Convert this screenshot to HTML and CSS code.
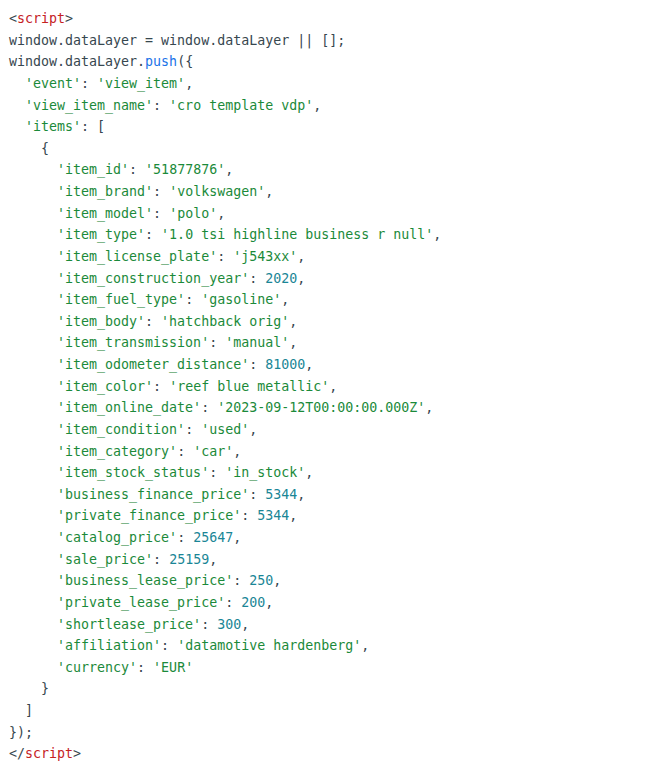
FILE: index.html
```html
<!DOCTYPE html>
<html>
<head>
<meta charset="utf-8">
<link rel="stylesheet" href="styles.css">
</head>
<body>
<div class="code">
<div class="ln">&lt;<span class="tag">script</span>&gt;</div>
<div class="ln">window.dataLayer = window.dataLayer || [];</div>
<div class="ln">window.dataLayer.<span class="fn">push</span>({</div>
<div class="ln i1"><span class="s">'event'</span>: <span class="s">'view_item'</span>,</div>
<div class="ln i1"><span class="s">'view_item_name'</span>: <span class="s">'cro template vdp'</span>,</div>
<div class="ln i1"><span class="s">'items'</span>: [</div>
<div class="ln i2">{</div>
<div class="ln i3"><span class="s">'item_id'</span>: <span class="s">'51877876'</span>,</div>
<div class="ln i3"><span class="s">'item_brand'</span>: <span class="s">'volkswagen'</span>,</div>
<div class="ln i3"><span class="s">'item_model'</span>: <span class="s">'polo'</span>,</div>
<div class="ln i3"><span class="s">'item_type'</span>: <span class="s">'1.0 tsi highline business r null'</span>,</div>
<div class="ln i3"><span class="s">'item_license_plate'</span>: <span class="s">'j543xx'</span>,</div>
<div class="ln i3"><span class="s">'item_construction_year'</span>: <span class="n">2020</span>,</div>
<div class="ln i3"><span class="s">'item_fuel_type'</span>: <span class="s">'gasoline'</span>,</div>
<div class="ln i3"><span class="s">'item_body'</span>: <span class="s">'hatchback orig'</span>,</div>
<div class="ln i3"><span class="s">'item_transmission'</span>: <span class="s">'manual'</span>,</div>
<div class="ln i3"><span class="s">'item_odometer_distance'</span>: <span class="n">81000</span>,</div>
<div class="ln i3"><span class="s">'item_color'</span>: <span class="s">'reef blue metallic'</span>,</div>
<div class="ln i3"><span class="s">'item_online_date'</span>: <span class="s">'2023-09-12T00:00:00.000Z'</span>,</div>
<div class="ln i3"><span class="s">'item_condition'</span>: <span class="s">'used'</span>,</div>
<div class="ln i3"><span class="s">'item_category'</span>: <span class="s">'car'</span>,</div>
<div class="ln i3"><span class="s">'item_stock_status'</span>: <span class="s">'in_stock'</span>,</div>
<div class="ln i3"><span class="s">'business_finance_price'</span>: <span class="n">5344</span>,</div>
<div class="ln i3"><span class="s">'private_finance_price'</span>: <span class="n">5344</span>,</div>
<div class="ln i3"><span class="s">'catalog_price'</span>: <span class="n">25647</span>,</div>
<div class="ln i3"><span class="s">'sale_price'</span>: <span class="n">25159</span>,</div>
<div class="ln i3"><span class="s">'business_lease_price'</span>: <span class="n">250</span>,</div>
<div class="ln i3"><span class="s">'private_lease_price'</span>: <span class="n">200</span>,</div>
<div class="ln i3"><span class="s">'shortlease_price'</span>: <span class="n">300</span>,</div>
<div class="ln i3"><span class="s">'affiliation'</span>: <span class="s">'datamotive hardenberg'</span>,</div>
<div class="ln i3"><span class="s">'currency'</span>: <span class="s">'EUR'</span></div>
<div class="ln i2">}</div>
<div class="ln i1">]</div>
<div class="ln">});</div>
<div class="ln">&lt;/<span class="tag">script</span>&gt;</div>
</div>
</body>
</html>
```

FILE: styles.css
```css
html, body {
  margin: 0;
  padding: 0;
  background: #ffffff;
}
.code {
  padding: 8px 9px;
  font-family: "DejaVu Sans Mono", "Liberation Mono", monospace;
  font-size: 13.3px;
  line-height: 21.62px;
  color: #37474f;
}
.ln {
  white-space: pre;
}
.i1 { padding-left: 2ch; }
.i2 { padding-left: 4ch; }
.i3 { padding-left: 6ch; }
.s { color: #1b8a3a; }
.n { color: #1a8696; }
.fn { color: #1a73e8; }
.tag { color: #c5221f; }
```
